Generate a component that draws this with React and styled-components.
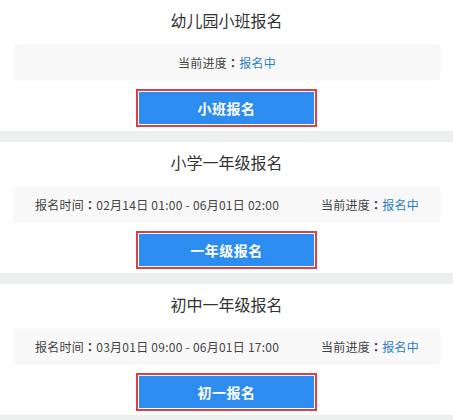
import React from "react";
import styled, { createGlobalStyle } from "styled-components";

const GlobalStyle = createGlobalStyle`
  body {
    margin: 0;
    background: #edefef;
    font-family: "Noto Sans CJK SC", "Liberation Sans", sans-serif;
    color: #333;
  }
`;

const List = styled.div`
  display: flex;
  flex-direction: column;
  gap: 11px;
  width: 453px;
`;

const Card = styled.section`
  background: #fff;
  display: flex;
  flex-direction: column;
  align-items: center;
  padding: 6px 0 4px;
`;

const Title = styled.h2`
  margin: 0;
  height: 28px;
  line-height: 28px;
  font-size: 16px;
  font-weight: normal;
  color: #333;
`;

const Info = styled.div`
  align-self: stretch;
  margin: 11px 13px 0 14px;
  height: 35px;
  background: #f8f8f8;
  box-shadow: 0 0 3px rgba(0, 0, 0, 0.03);
  display: flex;
  align-items: center;
  justify-content: ${(p) => (p.$single ? "center" : "space-between")};
  padding: 0 21px;
  font-size: 12px;
  letter-spacing: 0.25px;
  color: #444;
`;

const Colon = styled.span`
  font-family: "Noto Sans CJK TC", sans-serif;
  font-weight: bold;
`;

const Status = styled.span`
  color: #2d7fc1;
`;

const Button = styled.button`
  margin-top: 9px;
  width: 181px;
  height: 38px;
  border: 2px solid #d6424b;
  padding: 1px;
  background: #fff;
  cursor: pointer;
  font-family: inherit;
  display: flex;
`;

const ButtonFace = styled.span`
  flex: 1;
  display: flex;
  align-items: center;
  justify-content: center;
  background: #2d8cf0;
  color: #fff;
  font-size: 14px;
  font-weight: bold;
  letter-spacing: 0.5px;
`;

const items = [
  { title: "幼儿园小班报名", button: "小班报名" },
  {
    title: "小学一年级报名",
    time: "02月14日 01:00 - 06月01日 02:00",
    button: "一年级报名",
  },
  {
    title: "初中一年级报名",
    time: "03月01日 09:00 - 06月01日 17:00",
    button: "初一报名",
  },
];

export default function App() {
  return (
    <>
      <GlobalStyle />
      <List>
        {items.map((item) => (
          <Card key={item.title}>
            <Title>{item.title}</Title>
            <Info $single={!item.time}>
              {item.time && (
                <span>
                  报名时间<Colon>：</Colon>
                  {item.time}
                </span>
              )}
              <span>
                当前进度<Colon>：</Colon>
                <Status>报名中</Status>
              </span>
            </Info>
            <Button>
              <ButtonFace>{item.button}</ButtonFace>
            </Button>
          </Card>
        ))}
      </List>
    </>
  );
}
